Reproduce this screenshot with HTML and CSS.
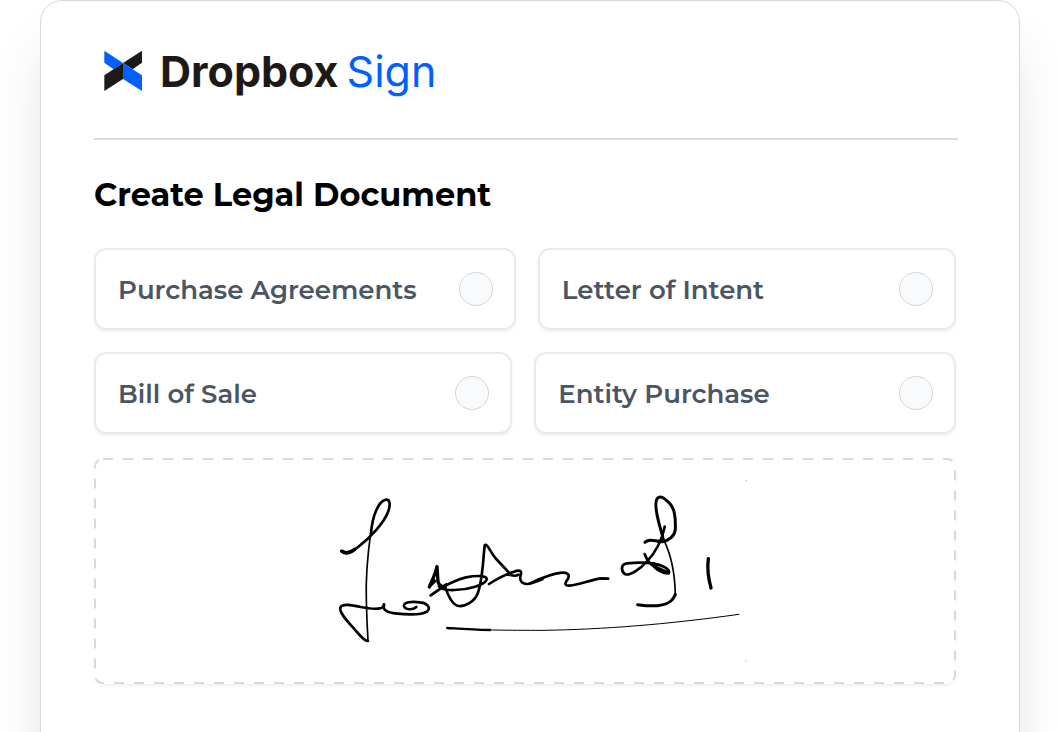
FILE: index.html
```html
<!DOCTYPE html>
<html lang="en">
<head>
<meta charset="utf-8">
<meta name="viewport" content="width=device-width, initial-scale=1">
<title>Create Legal Document</title>
<link rel="stylesheet" href="styles.css">
</head>
<body>
<main class="page">
  <div class="panel">
    <header class="brand">
      <svg class="brand-mark" viewBox="0 0 114 126" aria-hidden="true">
        <path fill="#0061ff" d="M1 2 57 39 29 58 1 38Z"/>
        <path fill="#1e1919" d="M114 2V38L86 58 57 39Z"/>
        <path fill="#1e1919" d="M57 39V87L1 123V76Z"/>
        <path fill="#0061ff" d="M57 39 114 76V123L57 87Z"/>
      </svg>
      <span class="brand-name">Dropbox</span>
      <span class="brand-product">Sign</span>
    </header>
    <form class="document-form">
      <h1 class="title">Create Legal Document</h1>
      <div class="options">
        <div class="option-row">
          <label class="option wide"><span>Purchase Agreements</span><input class="radio" type="radio" name="document"></label>
          <label class="option"><span>Letter of Intent</span><input class="radio" type="radio" name="document"></label>
        </div>
        <div class="option-row">
          <label class="option"><span>Bill of Sale</span><input class="radio" type="radio" name="document"></label>
          <label class="option wide"><span>Entity Purchase</span><input class="radio" type="radio" name="document"></label>
        </div>
      </div>
      <div class="signature-box">
        <svg class="dashes" aria-hidden="true"><rect x="1" y="1" rx="8"/></svg>
        <svg class="signature" viewBox="0 0 1332 546" role="img" aria-label="Signature">
          <g transform="translate(51 0)">
            <path stroke-width="8" d="M64 213C78 224 96 216 113 202C151 174 192 128 204 96C213 72 209 58 198 59C175 63 157 108 153 160"/>
            <path stroke-width="11" d="M66 214C77 222 91 218 104 208"/>
            <path stroke-width="5" d="M153 152C143 223 137 300 139 360C140 407 142 450 144 482"/>
            <path stroke-width="8" d="M144 483C134 484 120 467 104 448C82 424 57 398 61 383C66 369 96 375 122 381C146 386 171 388 184 384C193 381 194 370 191 374C188 390 202 398 225 400C259 404 305 405 322 394C335 382 318 368 300 367C275 364 250 366 252 378C255 390 278 391 289 381"/>
            <path stroke-width="10" d="M328 321C337 300 347 281 351 260L354 305C357 319 370 324 379 314M328 319 344 303"/>
            <path stroke-width="8" d="M332 346C363 323 402 300 438 292C469 286 502 286 500 298C496 315 445 329 403 330C381 331 362 327 357 319M375 318C382 345 398 376 416 378C436 380 463 365 472 343C488 305 489 240 494 196C501 188 510 214 526 234L568 279"/>
            <path stroke-width="8" d="M507 312C529 298 558 283 580 276M566 284C578 287 588 291 594 284M580 276C598 269 607 271 602 285C597 302 606 313 623 312C637 311 648 304 667 298"/>
            <path stroke-width="3" d="M380 443C470 451 562 451 672 451C850 448 1035 434 1257 403"/>
            <path stroke-width="7" d="M382 444C415 446 453 449 510 450"/>
          </g>
          <g transform="translate(681 0)">
            <path stroke-width="8" d="M0 310C34 294 73 280 96 278C113 277 121 284 113 298C104 311 102 317 119 317C147 315 188 297 216 295L235 296"/>
            <path stroke-width="9" d="M345 187C357 174 373 184 397 185C417 182 434 168 436 148C437 113 435 82 413 64C401 54 394 47 384 53C373 63 379 99 386 126C390 143 396 158 400 179"/>
            <path stroke-width="8" d="M404 140C397 180 375 220 351 244C330 268 300 287 286 283C273 276 273 257 284 252C303 247 345 247 370 250C396 255 423 268 416 280C400 281 378 268 369 257C356 248 349 236 344 222M369 257 411 276"/>
            <path stroke-width="5" d="M402 181C424 226 435 290 436 345"/>
            <path stroke-width="9" d="M436 343C427 369 406 375 382 377C361 379 338 376 323 374"/>
            <path stroke-width="10" d="M535 236C531 265 535 295 543 324"/>
            <path class="corner" stroke-width="3" d="M646 2H651M646 544 651 542"/>
          </g>
        </svg>
      </div>
    </form>
  </div>
</main>
</body>
</html>
```
FILE: styles.css
```css
* { box-sizing: border-box; }

body {
  margin: 0;
  background: #fff;
  color: #000;
  font-family: Montserrat, Inter, sans-serif;
}

.page {
  height: 100vh;
  overflow: hidden;
  padding: 0 40px;
}

.panel {
  min-height: calc(100vh + 80px);
  padding: 48px 63px 48px 53px;
  background: #fff;
  border: 1px solid #d8d8d8;
  border-radius: 22px;
  box-shadow: 0 40px 60px -12px rgba(0, 0, 0, 0.15);
}

.brand {
  display: flex;
  align-items: center;
  height: 91px;
  padding-bottom: 45px;
  margin-right: -2px;
  border-bottom: 2px solid #dcdcdc;
  font-family: Inter, "Liberation Sans", sans-serif;
  font-size: 43px;
  line-height: 44px;
}

.brand-mark {
  width: 38px;
  height: 42px;
  margin: 0 18px 0 10px;
}

.brand-name {
  color: #1e1919;
  font-weight: 700;
}

.brand-product {
  margin-left: 8px;
  color: #0061ff;
}

.title {
  margin: 34px 0 32px;
  font-size: 32px;
  font-weight: 700;
  line-height: 42px;
}

.options {
  display: grid;
  gap: 22px;
}

.option-row {
  display: flex;
  gap: 22px;
}

.option {
  display: flex;
  flex: 418 1 0;
  align-items: center;
  justify-content: space-between;
  height: 82px;
  padding: 0 21px 0 22px;
  border: 2px solid #e8eaed;
  border-radius: 12px;
  box-shadow: 0 2px 3px rgba(0, 0, 0, 0.06);
  color: #4b5563;
  font-size: 26px;
  font-weight: 600;
  white-space: nowrap;
}

.option span { padding-top: 2px; }

.option.wide { flex-grow: 422; }

.radio {
  appearance: none;
  flex: none;
  width: 34px;
  height: 34px;
  margin: 0;
  border: 1px solid #d1d5db;
  border-radius: 50%;
  background: #f9fafb;
}

.radio:checked { border: 10px solid #0061ff; }

.signature-box {
  position: relative;
  display: flex;
  align-items: center;
  justify-content: center;
  height: 226px;
  margin-top: 24px;
  border-radius: 10px;
  box-shadow: 0 2px 3px rgba(0, 0, 0, 0.06);
}

.dashes {
  position: absolute;
  inset: 0;
  width: 100%;
  height: 100%;
}

.dashes rect {
  width: calc(100% - 2px);
  height: calc(100% - 2px);
  fill: none;
  stroke: #d6d9df;
  stroke-width: 2px;
  stroke-dasharray: 10 10;
}

.signature {
  width: 444px;
  height: 182px;
  fill: none;
  stroke: #000;
  stroke-linecap: round;
  stroke-linejoin: round;
}

.corner { stroke: #ccc; }
```
